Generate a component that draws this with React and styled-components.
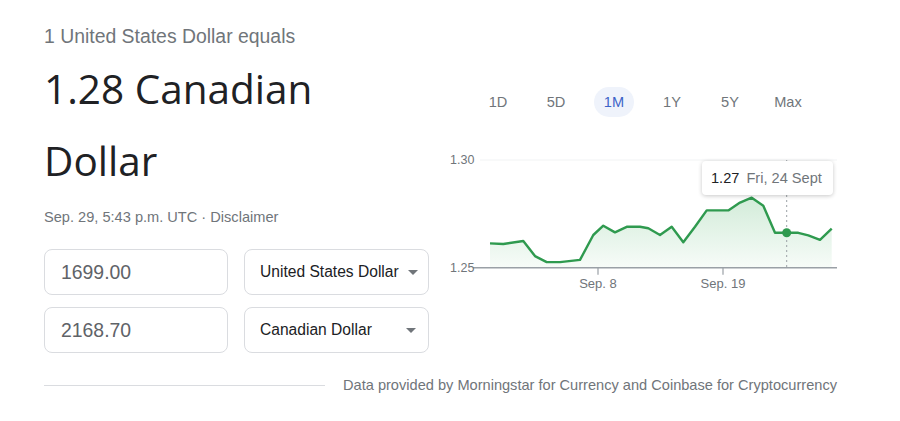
import React from "react";
import styled, { createGlobalStyle } from "styled-components";

const GlobalStyle = createGlobalStyle`
  body {
    margin: 0;
    background: #ffffff;
    font-family: "Liberation Sans", Arial, sans-serif;
  }
`;

const Page = styled.div`
  width: 900px;
  height: 421px;
  padding: 0 44px;
  box-sizing: border-box;
  overflow: hidden;
`;

const Main = styled.div`
  display: flex;
`;

const LeftCol = styled.div`
  width: 386px;
  display: flex;
  flex-direction: column;
`;

const Caption = styled.div`
  margin-top: 24px;
  font-size: 19.4px;
  line-height: 24px;
  color: #70757a;
`;

const Headline = styled.div`
  margin-top: 5px;
  font-family: "Open Sans", sans-serif;
  font-size: 40.5px;
  line-height: 72px;
  color: #202124;
  width: 300px;
`;

const Stamp = styled.div`
  margin-top: 10px;
  font-size: 14.6px;
  line-height: 20px;
  color: #70757a;
`;

const Converter = styled.div`
  margin-top: 22px;
  display: grid;
  grid-template-columns: 184px 185px;
  column-gap: 16px;
  row-gap: 12px;
`;

const Field = styled.div`
  height: 46px;
  box-sizing: border-box;
  border: 1px solid #dadce0;
  border-radius: 8px;
  display: flex;
  align-items: center;
  padding: ${(p) => (p.$select ? "0 10px 0 15px" : "0 16px")};
  font-size: ${(p) => (p.$select ? "15.6px" : "19.4px")};
  color: ${(p) => (p.$select ? "#202124" : "#5f6368")};
  justify-content: space-between;
  white-space: nowrap;
`;

const Caret = styled.span`
  flex: none;
  width: 0;
  height: 0;
  border-left: 5px solid transparent;
  border-right: 5px solid transparent;
  border-top: 5px solid #70757a;
  margin-right: ${(p) => p.$inset || 0}px;
`;

const RightCol = styled.div`
  width: 400px;
  margin-left: 10px;
  padding-top: 87px;
  display: flex;
  flex-direction: column;
`;

const Ranges = styled.div`
  display: flex;
  gap: 18px;
  padding-left: 38px;
`;

const Range = styled.div`
  width: 40px;
  height: 30px;
  border-radius: 15px;
  display: flex;
  align-items: center;
  justify-content: center;
  font-size: 14.6px;
  color: ${(p) => (p.$active ? "#3c64c8" : "#70757a")};
  background: ${(p) => (p.$active ? "#eff3fb" : "transparent")};
`;

const ChartBox = styled.div`
  position: relative;
  margin-top: 23px;
  width: 400px;
  height: 155px;
`;

const Tooltip = styled.div`
  position: absolute;
  left: 262px;
  top: 21px;
  width: 131px;
  height: 34px;
  box-sizing: border-box;
  background: #ffffff;
  border-radius: 4px;
  box-shadow: 0 1px 4px rgba(0, 0, 0, 0.22);
  display: flex;
  align-items: center;
  padding-left: 9px;
  font-size: 14.6px;
  color: #70757a;
  gap: 7px;
  white-space: nowrap;
  b {
    font-weight: normal;
    color: #202124;
  }
`;

const Footer = styled.div`
  margin-top: 22px;
  display: flex;
  align-items: center;
  gap: 18px;
`;

const Rule = styled.div`
  width: 281px;
  height: 1px;
  background: #dadce0;
`;

const Source = styled.div`
  font-size: 14.6px;
  line-height: 20px;
  color: #70757a;
  white-space: nowrap;
`;

// page-space points of the 1M series, shifted into the svg box below
const ORIGIN_X = 440;
const ORIGIN_Y = 140;
const TOP_Y = 160;
const BASE_Y = 267.7;

const series = [
  [490, 1.2613], [503.3, 1.261], [523.3, 1.2624], [535, 1.2554], [546.7, 1.2526],
  [560, 1.2526], [580, 1.2536], [593.3, 1.2652], [603.3, 1.2695], [615, 1.2664],
  [626.7, 1.269], [640, 1.269], [648.3, 1.2683], [660, 1.2652], [671.7, 1.269],
  [683.3, 1.2618], [695, 1.269], [706.7, 1.2766], [728.3, 1.2766], [740, 1.2802],
  [751.7, 1.2825], [763.3, 1.2788], [775, 1.2662], [786.7, 1.2662], [798.3, 1.2662],
  [808.3, 1.265], [820, 1.2629], [831.7, 1.2681],
];

const toY = (v) => BASE_Y - ((v - 1.25) / 0.05) * (BASE_Y - TOP_Y) - ORIGIN_Y;
const toX = (x) => x - ORIGIN_X;

const RateChart = () => {
  const pts = series.map(([x, v]) => [toX(x), toY(v)]);
  const line = pts.map((p, i) => `${i ? "L" : "M"}${p[0].toFixed(1)},${p[1].toFixed(1)}`).join(" ");
  const base = BASE_Y - ORIGIN_Y;
  const area = `${line} L${pts[pts.length - 1][0]},${base} L${pts[0][0]},${base} Z`;
  const hover = pts[23];
  return (
    <svg width="400" height="155" viewBox="0 0 400 155">
      <defs>
        <linearGradient id="fillGreen" x1="0" y1="0" x2="0" y2="1">
          <stop offset="0" stopColor="#34a853" stopOpacity="0.22" />
          <stop offset="1" stopColor="#34a853" stopOpacity="0.04" />
        </linearGradient>
      </defs>
      <line x1="40" x2="397" y1={TOP_Y - ORIGIN_Y} y2={TOP_Y - ORIGIN_Y} stroke="#f1f3f4" strokeWidth="1" />
      <text x="10" y={TOP_Y - ORIGIN_Y + 4} fontSize="12.5" fill="#70757a" fontFamily="Liberation Sans, Arial, sans-serif">1.30</text>
      <path d={area} fill="url(#fillGreen)" />
      <line x1={hover[0]} x2={hover[0]} y1="20" y2={base} stroke="#9aa0a6" strokeWidth="1" strokeDasharray="2 3" />
      <path d={line} fill="none" stroke="#2f9a4f" strokeWidth="2.4" strokeLinejoin="round" />
      <circle cx={hover[0]} cy={hover[1]} r="4.5" fill="#2f9a4f" />
      <line x1="33" x2="397" y1={base} y2={base} stroke="#9aa0a6" strokeWidth="1.6" />
      <text x="10" y={base + 4} fontSize="12.5" fill="#70757a" fontFamily="Liberation Sans, Arial, sans-serif">1.25</text>
      {[[598, "Sep. 8"], [723, "Sep. 19"]].map(([x, label]) => (
        <g key={label}>
          <line x1={toX(x)} x2={toX(x)} y1={base} y2={base + 7} stroke="#9aa0a6" strokeWidth="1.2" />
          <text x={toX(x)} y={base + 20} fontSize="13" textAnchor="middle" fill="#70757a" fontFamily="Liberation Sans, Arial, sans-serif">
            {label}
          </text>
        </g>
      ))}
    </svg>
  );
};

const ranges = ["1D", "5D", "1M", "1Y", "5Y", "Max"];

export default function App() {
  return (
    <Page>
      <GlobalStyle />
      <Main>
        <LeftCol>
          <Caption>1 United States Dollar equals</Caption>
          <Headline>1.28 Canadian Dollar</Headline>
          <Stamp>Sep. 29, 5:43 p.m. UTC · Disclaimer</Stamp>
          <Converter>
            <Field>1699.00</Field>
            <Field $select>
              United States Dollar
              <Caret />
            </Field>
            <Field>2168.70</Field>
            <Field $select>
              Canadian Dollar
              <Caret $inset={2} />
            </Field>
          </Converter>
        </LeftCol>
        <RightCol>
          <Ranges>
            {ranges.map((r) => (
              <Range key={r} $active={r === "1M"}>
                {r}
              </Range>
            ))}
          </Ranges>
          <ChartBox>
            <RateChart />
            <Tooltip>
              <b>1.27</b>
              <span>Fri, 24 Sept</span>
            </Tooltip>
          </ChartBox>
        </RightCol>
      </Main>
      <Footer>
        <Rule />
        <Source>Data provided by Morningstar for Currency and Coinbase for Cryptocurrency</Source>
      </Footer>
    </Page>
  );
}
